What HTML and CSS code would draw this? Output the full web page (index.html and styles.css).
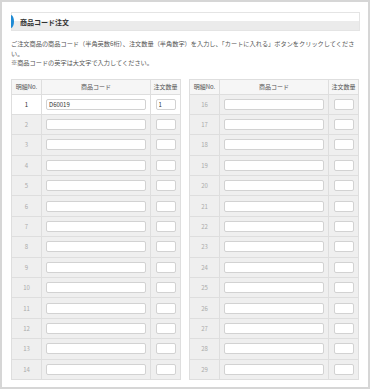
FILE: index.html
```html
<!DOCTYPE html>
<html lang="ja">
<head>
    <meta charset="UTF-8">
    <meta name="viewport" content="width=device-width, initial-scale=1.0">
    <title>商品コード注文</title>
    <link rel="stylesheet" href="styles.css">
</head>
<body>
    <div class="frame">
        <div class="viewport">
            <h2 class="section-title">商品コード注文</h2>

            <p class="lead">ご注文商品の商品コード（半角英数6桁）、注文数量（半角数字）を入力し、「カートに入れる」ボタンをクリックしてください。<br>※商品コードの英字は大文字で入力してください。</p>

            <form class="order-form">
                <table class="order-table">
                    <colgroup><col class="col-no"><col class="col-code"><col class="col-qty"></colgroup>
                    <thead>
                        <tr><th>明細No.</th><th>商品コード</th><th>注文数量</th></tr>
                    </thead>
                    <tbody>
                        <tr class="filled"><td class="no">1</td><td><input class="code" type="text" value="D60019"></td><td><input class="qty" type="text" value="1"></td></tr>
                        <tr><td class="no">2</td><td><input class="code" type="text"></td><td><input class="qty" type="text"></td></tr>
                        <tr><td class="no">3</td><td><input class="code" type="text"></td><td><input class="qty" type="text"></td></tr>
                        <tr><td class="no">4</td><td><input class="code" type="text"></td><td><input class="qty" type="text"></td></tr>
                        <tr><td class="no">5</td><td><input class="code" type="text"></td><td><input class="qty" type="text"></td></tr>
                        <tr><td class="no">6</td><td><input class="code" type="text"></td><td><input class="qty" type="text"></td></tr>
                        <tr><td class="no">7</td><td><input class="code" type="text"></td><td><input class="qty" type="text"></td></tr>
                        <tr><td class="no">8</td><td><input class="code" type="text"></td><td><input class="qty" type="text"></td></tr>
                        <tr><td class="no">9</td><td><input class="code" type="text"></td><td><input class="qty" type="text"></td></tr>
                        <tr><td class="no">10</td><td><input class="code" type="text"></td><td><input class="qty" type="text"></td></tr>
                        <tr><td class="no">11</td><td><input class="code" type="text"></td><td><input class="qty" type="text"></td></tr>
                        <tr><td class="no">12</td><td><input class="code" type="text"></td><td><input class="qty" type="text"></td></tr>
                        <tr><td class="no">13</td><td><input class="code" type="text"></td><td><input class="qty" type="text"></td></tr>
                        <tr><td class="no">14</td><td><input class="code" type="text"></td><td><input class="qty" type="text"></td></tr>
                        <tr><td class="no">15</td><td><input class="code" type="text"></td><td><input class="qty" type="text"></td></tr>
                    </tbody>
                </table>

                <table class="order-table">
                    <colgroup><col class="col-no"><col class="col-code"><col class="col-qty"></colgroup>
                    <thead>
                        <tr><th>明細No.</th><th>商品コード</th><th>注文数量</th></tr>
                    </thead>
                    <tbody>
                        <tr><td class="no">16</td><td><input class="code" type="text"></td><td><input class="qty" type="text"></td></tr>
                        <tr><td class="no">17</td><td><input class="code" type="text"></td><td><input class="qty" type="text"></td></tr>
                        <tr><td class="no">18</td><td><input class="code" type="text"></td><td><input class="qty" type="text"></td></tr>
                        <tr><td class="no">19</td><td><input class="code" type="text"></td><td><input class="qty" type="text"></td></tr>
                        <tr><td class="no">20</td><td><input class="code" type="text"></td><td><input class="qty" type="text"></td></tr>
                        <tr><td class="no">21</td><td><input class="code" type="text"></td><td><input class="qty" type="text"></td></tr>
                        <tr><td class="no">22</td><td><input class="code" type="text"></td><td><input class="qty" type="text"></td></tr>
                        <tr><td class="no">23</td><td><input class="code" type="text"></td><td><input class="qty" type="text"></td></tr>
                        <tr><td class="no">24</td><td><input class="code" type="text"></td><td><input class="qty" type="text"></td></tr>
                        <tr><td class="no">25</td><td><input class="code" type="text"></td><td><input class="qty" type="text"></td></tr>
                        <tr><td class="no">26</td><td><input class="code" type="text"></td><td><input class="qty" type="text"></td></tr>
                        <tr><td class="no">27</td><td><input class="code" type="text"></td><td><input class="qty" type="text"></td></tr>
                        <tr><td class="no">28</td><td><input class="code" type="text"></td><td><input class="qty" type="text"></td></tr>
                        <tr><td class="no">29</td><td><input class="code" type="text"></td><td><input class="qty" type="text"></td></tr>
                        <tr><td class="no">30</td><td><input class="code" type="text"></td><td><input class="qty" type="text"></td></tr>
                    </tbody>
                </table>
            </form>
        </div>
    </div>
</body>
</html>
```

FILE: styles.css
```css
body {
    margin: 0;
    background: #fff;
    font-family: "Noto Sans CJK JP", "Noto Sans", sans-serif;
    color: #444;
}

.frame {
    width: 370px;
    height: 389px;
    border: 2px solid #d6d6d6;
    box-sizing: border-box;
    padding: 10px 8px 7px 9px;
    display: flex;
    flex-direction: column;
}

.viewport {
    flex: 1;
    overflow: hidden;
}

/* Section heading bar with the blue tab */
.section-title {
    position: relative;
    margin: 0;
    height: 19px;
    line-height: 19px;
    padding-left: 8px;
    border: 1px solid #e4e4e4;
    box-sizing: border-box;
    background: linear-gradient(#fff 0, #fff 50%, #ebebeb 50%, #ebebeb 100%);
    font-size: 7px;
    font-weight: bold;
    color: #333;
}

.section-title::before {
    content: "";
    position: absolute;
    left: -1px;
    top: 2px;
    width: 3px;
    height: 13px;
    background: #1e8ad4;
    border-radius: 0 3px 3px 0 / 0 50% 50% 0;
}

.lead {
    margin: 8px 0 0;
    font-size: 6.2px;
    line-height: 9.5px;
    color: #555;
}

.order-form {
    display: flex;
    gap: 8px;
    margin-top: 11px;
}

.order-table {
    width: 169px;
    border-collapse: collapse;
    table-layout: fixed;
    font-size: 6px;
}

.col-no { width: 30px; }
.col-code { width: 109px; }
.col-qty { width: 30px; }

.order-table th,
.order-table td {
    border: 1px solid #dedede;
    text-align: center;
    padding: 0;
}

.order-table th {
    height: 14px;
    background: #f6f6f6;
    font-weight: normal;
    color: #555;
}

.order-table td {
    height: 19.4px;
    background: #efefef;
}

.order-table tr.filled td {
    background: #fff;
}

.order-table td.no {
    color: #aaa;
}

.order-table tr.filled td.no {
    color: #333;
}

.order-table input {
    display: block;
    margin: 0 auto;
    height: 11px;
    padding: 0 2px;
    border: 1px solid #d2d2d2;
    border-radius: 2px;
    background: #fff;
    box-sizing: border-box;
    font-family: inherit;
    font-size: 6px;
    color: #333;
}

.order-table input.code {
    width: 100px;
}

.order-table input.qty {
    width: 20px;
}
```
